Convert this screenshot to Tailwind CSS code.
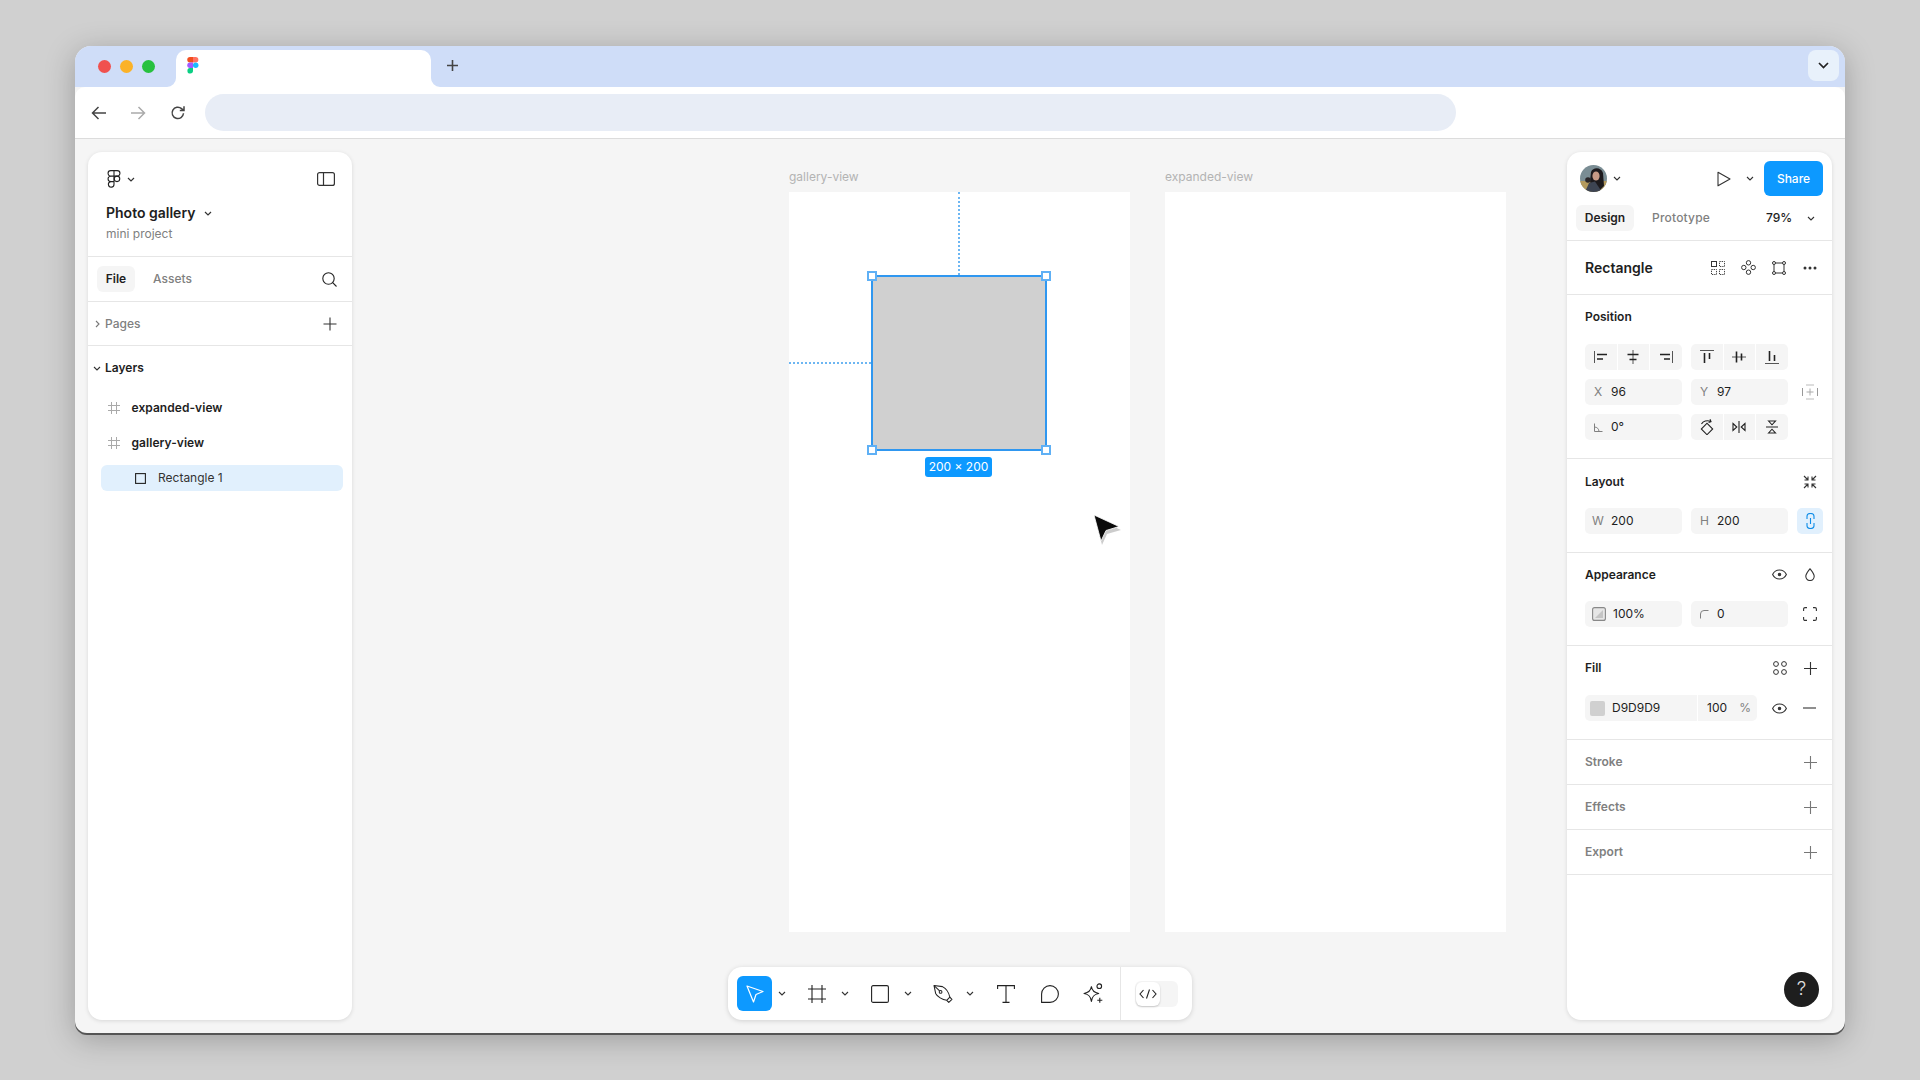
<!doctype html>
<html><head><meta charset="utf-8"><title>Photo gallery</title>
<script src="https://cdn.jsdelivr.net/npm/@tailwindcss/browser@4"></script>
</head>
<body class="m-0 w-[1920px] h-[1080px] overflow-hidden bg-[#d0d0d0] font-['Inter',sans-serif] text-[12px] text-[#1e1e1e]">
<div class="pt-[46px] pl-[75px]">
<div class="w-[1770px] h-[987px] rounded-t-[16px] rounded-b-[12px] overflow-hidden bg-[#f5f5f5] flex flex-col shadow-[0_2px_0_#555,0_6px_30px_rgba(0,0,0,0.25)]">
  <!-- tab strip -->
  <div class="h-[41px] bg-[#cfddf8] flex items-end relative shrink-0">
    <div class="flex gap-[9px] h-[41px] items-center pl-[23px] pb-[1px] w-[101px] shrink-0">
      <span class="w-[13px] h-[13px] rounded-full bg-[#f0514f]"></span>
      <span class="w-[13px] h-[13px] rounded-full bg-[#fbb228]"></span>
      <span class="w-[13px] h-[13px] rounded-full bg-[#27c13f]"></span>
    </div>
    <div class="relative w-[255px] h-[37px] bg-white rounded-t-[10px] flex items-center pl-[11px] pb-[7px]">
      <svg class="absolute -left-[9px] bottom-0" width="9" height="9" viewBox="0 0 9 9"><path d="M9 0V9H0A9 9 0 0 0 9 0Z" fill="#fff"/></svg>
      <svg class="absolute -right-[9px] bottom-0" width="9" height="9" viewBox="0 0 9 9"><path d="M0 0V9H9A9 9 0 0 1 0 0Z" fill="#fff"/></svg>
      <svg width="12" height="17" viewBox="0 0 12 17">
        <path d="M3 0H6V5.5H3A2.75 2.75 0 0 1 3 0Z" fill="#f24e1e"/>
        <path d="M6 0H8.6A2.75 2.75 0 0 1 8.6 5.5H6Z" fill="#ff7262"/>
        <path d="M3 5.5H6V11H3A2.75 2.75 0 0 1 3 5.5Z" fill="#a259ff"/>
        <circle cx="8.7" cy="8.25" r="2.75" fill="#1abcfe"/>
        <path d="M3 11H6V13.8A2.8 2.8 0 1 1 3 11Z" fill="#0acf83"/>
      </svg>
    </div>
    <div class="w-[43px] h-[41px] flex items-center justify-center pb-[3px]">
      <svg width="13" height="13" viewBox="0 0 13 13"><path d="M6.5 1V12M1 6.5H12" stroke="#444" stroke-width="1.6"/></svg>
    </div>
    <div class="ml-auto mr-[6px] mb-[6px] w-[31px] h-[31px] rounded-[8px] bg-[#e8f1fb] flex items-center justify-center">
      <svg width="11" height="7" viewBox="0 0 11 7"><path d="M1 1L5.5 5.5L10 1" fill="none" stroke="#222" stroke-width="1.7"/></svg>
    </div>
  </div>
  <!-- address bar -->
  <div class="h-[52px] bg-white rounded-t-[10px] border-b border-[#dcdcdc] flex items-center pl-[16px] shrink-0">
    <svg class="w-[16px] h-[14px] mr-[23px]" viewBox="0 0 16 14"><path d="M15 7H2M7.5 1L1.5 7L7.5 13" fill="none" stroke="#444" stroke-width="1.5"/></svg>
    <svg class="w-[16px] h-[14px] mr-[24px]" viewBox="0 0 16 14"><path d="M1 7H14M8.5 1L14.5 7L8.5 13" fill="none" stroke="#aaa" stroke-width="1.5"/></svg>
    <svg class="w-[16px] h-[16px] mr-[19px]" viewBox="0 0 16 16"><path d="M13.5 8.3A5.7 5.7 0 1 1 11.6 3.6L14 5.6M14 1.2V5.6H9.8" fill="none" stroke="#444" stroke-width="1.5"/></svg>
    <div class="w-[1251px] h-[37px] rounded-full bg-[#e8edf6]"></div>
  </div>
  <!-- main -->
  <div class="flex-1 flex px-[13px] py-[13px] min-h-0">
    <!-- left panel -->
    <aside class="w-[264px] h-[868px] bg-white rounded-[14px] shadow-[0_1px_4px_rgba(0,0,0,0.12)] shrink-0">
      <div class="h-[105px] border-b border-[#e6e6e6] pl-[18px] pr-[17px] pt-[16px]">
        <div class="flex items-center justify-between h-[22px]">
          <div class="flex items-center gap-[6px] pl-[1px]">
            <svg width="14" height="18" viewBox="0 0 14 18" fill="none" stroke="#222" stroke-width="1.1"><path d="M7 .6H3.8a2.7 2.7 0 0 0 0 5.5H7ZM7 .6h3.2a2.7 2.7 0 0 1 0 5.5H7ZM7 6.1H3.8a2.7 2.7 0 0 0 0 5.5H7ZM7 11.6H3.8A2.8 2.8 0 1 0 7 14.3Z"/><circle cx="10" cy="8.85" r="2.75"/></svg>
            <svg width="8" height="5" viewBox="0 0 8 5"><path d="M1 1L4 4L7 1" fill="none" stroke="#333" stroke-width="1.2"/></svg>
          </div>
          <svg width="18" height="14" viewBox="0 0 18 14" fill="none" stroke="#333" stroke-width="1.2"><rect x=".6" y=".6" width="16.8" height="12.8" rx="2"/><path d="M6.5 .6V13.4"/></svg>
        </div>
        <div class="flex items-center mt-[14px] h-[18px] gap-[9px]">
          <span class="text-[14px] font-semibold leading-none text-[#1e1e1e]">Photo gallery</span>
          <svg width="8" height="5" viewBox="0 0 8 5"><path d="M1 1L4 4L7 1" fill="none" stroke="#333" stroke-width="1.2"/></svg>
        </div>
        <div class="mt-[4px] text-[#808080] leading-[16px]">mini project</div>
      </div>
      <div class="h-[45px] border-b border-[#e6e6e6] flex items-center pl-[9px] pr-[15px]">
        <div class="w-[38px] h-[26px] rounded-[6px] bg-[#f5f5f5] flex items-center justify-center font-semibold">File</div>
        <div class="ml-[18px] text-[#808080] font-medium">Assets</div>
        <svg class="ml-auto" width="15" height="15" viewBox="0 0 15 15" fill="none" stroke="#222" stroke-width="1.1"><circle cx="6.5" cy="6.5" r="5.7"/><path d="M10.7 10.7L14.5 14.5"/></svg>
      </div>
      <div class="h-[44px] border-b border-[#e6e6e6] flex items-center pl-[7px] pr-[15px]">
        <svg width="5" height="8" viewBox="0 0 5 8"><path d="M1 1L4 4L1 7" fill="none" stroke="#777" stroke-width="1.1"/></svg>
        <span class="ml-[5px] font-medium text-[#808080]">Pages</span>
        <svg class="ml-auto" width="14" height="14" viewBox="0 0 14 14"><path d="M7 .5V13.5M.5 7H13.5" stroke="#333" stroke-width="1.1"/></svg>
      </div>
      <div class="h-[44px] flex items-center pl-[5px]">
        <svg width="8" height="5" viewBox="0 0 8 5"><path d="M1 1L4 4L7 1" fill="none" stroke="#333" stroke-width="1.1"/></svg>
        <span class="ml-[4px] font-semibold">Layers</span>
      </div>
      <div class="h-[35px] flex items-center pl-[20px]">
        <svg width="12" height="12" viewBox="0 0 12 12"><path d="M3.5 0V12M8.5 0V12M0 3.5H12M0 8.5H12" stroke="#aaa" stroke-width="1"/></svg>
        <span class="ml-[11.5px] font-semibold tracking-[0.05px]">expanded-view</span>
      </div>
      <div class="h-[35px] flex items-center pl-[20px]">
        <svg width="12" height="12" viewBox="0 0 12 12"><path d="M3.5 0V12M8.5 0V12M0 3.5H12M0 8.5H12" stroke="#aaa" stroke-width="1"/></svg>
        <span class="ml-[11.5px] font-semibold tracking-[0.05px]">gallery-view</span>
      </div>
      <div class="mx-[13px] mt-[5px] w-[242px] h-[26px] rounded-[6px] bg-[#e1f0fd] flex items-center pl-[34px]">
        <svg width="11" height="11" viewBox="0 0 11 11"><rect x=".6" y=".6" width="9.8" height="9.8" fill="none" stroke="#222" stroke-width="1.1"/></svg>
        <span class="ml-[12px] text-[#333]">Rectangle 1</span>
      </div>
    </aside>
    <!-- canvas -->
    <div class="flex-1 relative min-w-0">
      <div class="flex gap-[35px] pl-[437px]">
        <div class="w-[341px]">
          <div class="mt-[16px] mb-[6px] h-[18px] leading-[18px] text-[#b3b3b3]">gallery-view</div>
          <div class="relative h-[740px] bg-white">
            <div class="absolute left-[169px] top-0 h-[83px] border-l-2 border-dotted border-[#6db6f2]"></div>
            <div class="absolute left-0 top-[170px] w-[82px] border-t-2 border-dotted border-[#6db6f2]"></div>
            <div class="absolute left-[82px] top-[83px] w-[176px] h-[176px] border-2 border-[#2f97f0] bg-[#d0d0d0]">
              <span class="absolute -left-[6px] -top-[6px] w-[10px] h-[10px] bg-white border-2 border-[#5fb0f5]"></span>
              <span class="absolute -right-[6px] -top-[6px] w-[10px] h-[10px] bg-white border-2 border-[#5fb0f5]"></span>
              <span class="absolute -left-[6px] -bottom-[6px] w-[10px] h-[10px] bg-white border-2 border-[#5fb0f5]"></span>
              <span class="absolute -right-[6px] -bottom-[6px] w-[10px] h-[10px] bg-white border-2 border-[#5fb0f5]"></span>
            </div>
            <div class="absolute left-[136px] top-[265px] w-[67px] h-[20px] rounded-[3px] bg-[#0d99ff] text-white flex items-center justify-center leading-none">200 × 200</div>
            <svg class="absolute left-[302px] top-[321px]" width="32" height="34" viewBox="0 0 32 34">
              <path d="M3 3L10 30L15 19L29 15Z" fill="#000" opacity=".2" transform="translate(1 2)"/>
              <path d="M3 2L10 28L15 17.5L28 13.5Z" fill="#0a0a0a" stroke="#fff" stroke-width=".8"/>
            </svg>
          </div>
        </div>
        <div class="w-[341px]">
          <div class="mt-[16px] mb-[6px] h-[18px] leading-[18px] text-[#b3b3b3]">expanded-view</div>
          <div class="h-[740px] bg-white"></div>
        </div>
      </div>
      <!-- bottom tool bar -->
      <div class="absolute left-[376px] bottom-0 w-[464px] h-[53px] rounded-[14px] bg-white shadow-[0_1px_5px_rgba(0,0,0,0.15)] flex items-center pl-[9px]">
        <div class="w-[35px] h-[35px] rounded-[6px] bg-[#0d99ff] flex items-center justify-center">
          <svg width="20" height="20" viewBox="0 0 20 20"><path d="M2 2L18 7.5L11 10.5L8.5 18Z" fill="none" stroke="#fff" stroke-width="1.2" stroke-linejoin="round"/></svg>
        </div>
        <svg class="ml-[6px] mr-[4px]" width="8" height="5" viewBox="0 0 8 5"><path d="M1 1L4 4L7 1" fill="none" stroke="#333" stroke-width="1.1"/></svg>
        <div class="ml-[9px] w-[36px] flex justify-center"><svg width="18" height="18" viewBox="0 0 18 18"><path d="M4 0V18M14 0V18M0 4H18M0 14H18" stroke="#222" stroke-width="1.1"/></svg></div>
        <svg class="ml-[6px] mr-[4px]" width="8" height="5" viewBox="0 0 8 5"><path d="M1 1L4 4L7 1" fill="none" stroke="#333" stroke-width="1.1"/></svg>
        <div class="ml-[9px] w-[36px] flex justify-center"><svg width="18" height="18" viewBox="0 0 18 18"><rect x=".6" y=".6" width="16.8" height="16.8" rx="1.5" fill="none" stroke="#222" stroke-width="1.1"/></svg></div>
        <svg class="ml-[6px] mr-[4px]" width="8" height="5" viewBox="0 0 8 5"><path d="M1 1L4 4L7 1" fill="none" stroke="#333" stroke-width="1.1"/></svg>
        <div class="ml-[9px] w-[36px] flex justify-center"><svg width="20" height="20" viewBox="0 0 19 19" fill="none" stroke="#222" stroke-width="1" stroke-linejoin="round"><path d="M1 1.5L9 2.5C12 4 15 8 16 12.5L13 15.5C9 15 4 12 2.5 9Z"/><path d="M16 12.5L18 14.5L15 17.5L13 15.5"/><circle cx="7.2" cy="7.5" r="1.3"/><path d="M1 1.5L6.3 6.6"/></svg></div>
        <svg class="ml-[5px] mr-[4px]" width="8" height="5" viewBox="0 0 8 5"><path d="M1 1L4 4L7 1" fill="none" stroke="#333" stroke-width="1.1"/></svg>
        <div class="ml-[10px] w-[36px] flex justify-center"><svg width="18" height="18" viewBox="0 0 18 18" fill="none" stroke="#222" stroke-width="1.1"><path d="M.6 4V.6H17.4V4M9 .6V17.4M5.5 17.4H12.5"/></svg></div>
        <div class="ml-[8px] w-[36px] flex justify-center"><svg width="18" height="18" viewBox="0 0 18 18"><path d="M9 .6A8.4 8.4 0 0 1 9 17.4H.6V9A8.4 8.4 0 0 1 9 .6Z" fill="none" stroke="#222" stroke-width="1.1" stroke-linejoin="round"/></svg></div>
        <div class="ml-[7px] w-[36px] flex justify-center"><svg width="21" height="21" viewBox="0 0 20 20" fill="none" stroke="#222" stroke-width="1.05"><path d="M8 3.5C8.6 7.5 10.5 9.2 15 10C10.5 10.8 8.6 12.5 8 17.5C7.4 12.5 5.5 10.8 1 10C5.5 9.2 7.4 7.5 8 3.5Z" stroke-linejoin="round"/><circle cx="15.5" cy="3" r="2.2"/><path d="M16 14V18.8M13.6 16.4H18.4"/></svg></div>
        <div class="ml-[9px] w-px h-[53px] bg-[#e6e6e6]"></div>
        <div class="ml-[14px] w-[43px] h-[26px] rounded-[6px] bg-[#f5f5f5] pl-[1px] flex items-center">
          <div class="w-[24px] h-[24px] rounded-[6px] bg-white shadow-[0_1px_2px_rgba(0,0,0,0.2)] flex items-center justify-center">
            <svg width="18" height="10" viewBox="0 0 18 10" fill="none" stroke="#222" stroke-width="1.1"><path d="M4.5 1L1 5L4.5 9M13.5 1L17 5L13.5 9M10.5 .5L7.5 9.5"/></svg>
          </div>
        </div>
      </div>
    </div>
    <!-- right panel -->
    <aside class="w-[265px] h-[868px] bg-white rounded-[14px] shadow-[0_1px_4px_rgba(0,0,0,0.12)] shrink-0 relative">
      <div class="h-[89px] border-b border-[#e6e6e6]">
        <div class="h-[53px] flex items-center pl-[13px] pr-[9px]">
          <svg width="27" height="27" viewBox="0 0 27 27"><defs><clipPath id="av"><circle cx="13.5" cy="13.5" r="13.5"/></clipPath></defs><g clip-path="url(#av)"><rect width="27" height="27" fill="#7a8d94"/><rect y="16" width="27" height="11" fill="#b39a5e"/><path d="M11 7C13 2 21 2 23 8L24 21L19 26H12L10 16Z" fill="#1d1a1d"/><ellipse cx="16" cy="11" rx="3.6" ry="4.6" fill="#c79a86"/><path d="M5 27L9 18L15 16.5L22 27Z" fill="#3d4452"/><circle cx="8" cy="15" r="2.8" fill="#2a2628"/></g></svg>
          <svg class="ml-[6px]" width="8" height="5" viewBox="0 0 8 5"><path d="M1 1L4 4L7 1" fill="none" stroke="#333" stroke-width="1.1"/></svg>
          <svg class="ml-auto" width="14" height="16" viewBox="0 0 14 16"><path d="M1 1.2L13 8L1 14.8Z" fill="none" stroke="#333" stroke-width="1.1" stroke-linejoin="round"/></svg>
          <svg class="ml-[15px] mr-[10px]" width="8" height="5" viewBox="0 0 8 5"><path d="M1 1L4 4L7 1" fill="none" stroke="#333" stroke-width="1.1"/></svg>
          <div class="w-[59px] h-[35px] rounded-[6px] bg-[#0d99ff] text-white font-medium flex items-center justify-center">Share</div>
        </div>
        <div class="h-[26px] flex items-center pl-[9px]">
          <div class="w-[58px] h-[26px] rounded-[6px] bg-[#f5f5f5] flex items-center justify-center font-semibold">Design</div>
          <span class="ml-[18px] w-[58px] text-[#808080] font-medium tracking-[0.2px] whitespace-nowrap">Prototype</span>
          <span class="ml-[56px] font-medium">79%</span>
          <svg class="ml-[15px]" width="8" height="5" viewBox="0 0 8 5"><path d="M1 1L4 4L7 1" fill="none" stroke="#333" stroke-width="1.1"/></svg>
        </div>
      </div>
      <div class="h-[54px] border-b border-[#e6e6e6] flex items-center pl-[18px] pr-[15px]">
        <span class="text-[14px] font-semibold">Rectangle</span>
        <svg class="ml-auto" width="14" height="14" viewBox="0 0 14 14" fill="none" stroke="#333" stroke-width="1"><rect x=".5" y=".5" width="5" height="5"/><rect x="8.5" y=".5" width="5" height="5" stroke-dasharray="1.2 1"/><rect x=".5" y="8.5" width="5" height="5" stroke-dasharray="1.2 1"/><rect x="8.5" y="8.5" width="5" height="5" stroke-dasharray="1.2 1"/></svg>
        <svg class="ml-[16px]" width="15" height="15" viewBox="0 0 15 15" fill="none" stroke="#333" stroke-width="1"><circle cx="7.5" cy="2.8" r="2.2"/><circle cx="7.5" cy="12.2" r="2.2"/><circle cx="2.8" cy="7.5" r="2.2"/><circle cx="12.2" cy="7.5" r="2.2"/></svg>
        <svg class="ml-[16px]" width="14" height="14" viewBox="0 0 14 14" fill="none" stroke="#333" stroke-width="1"><circle cx="2" cy="2" r="1.5"/><circle cx="12" cy="2" r="1.5"/><circle cx="2" cy="12" r="1.5"/><circle cx="12" cy="12" r="1.5"/><path d="M3.5 2H10.5M3.5 12H10.5M2 3.5V10.5M12 3.5V10.5"/></svg>
        <svg class="ml-[17px]" width="14" height="4" viewBox="0 0 14 4" fill="#333"><circle cx="2" cy="2" r="1.5"/><circle cx="7" cy="2" r="1.5"/><circle cx="12" cy="2" r="1.5"/></svg>
      </div>
      <!-- position -->
      <div class="h-[164px] border-b border-[#e6e6e6] pl-[18px] pt-[13px]">
        <div class="h-[18px] leading-[18px] font-semibold">Position</div>
        <div class="mt-[18px] flex gap-[9px]">
          <div class="w-[97px] h-[26px] rounded-[5px] overflow-hidden grid grid-cols-3 gap-px">
            <div class="bg-[#f5f5f5] flex items-center justify-center"><svg width="14" height="14" viewBox="0 0 14 14"><path d="M.5 1V13" stroke="#555"/><path d="M3 4.5H13M3 9H9" stroke="#222" stroke-width="1.6"/></svg></div>
            <div class="bg-[#f5f5f5] flex items-center justify-center"><svg width="14" height="14" viewBox="0 0 14 14"><path d="M7 0V14" stroke="#555"/><path d="M1.5 4.5H12.5M3.5 9.5H10.5" stroke="#222" stroke-width="1.6"/></svg></div>
            <div class="bg-[#f5f5f5] flex items-center justify-center"><svg width="14" height="14" viewBox="0 0 14 14"><path d="M13.5 1V13" stroke="#555"/><path d="M1 4.5H11M5 9H11" stroke="#222" stroke-width="1.6"/></svg></div>
          </div>
          <div class="w-[97px] h-[26px] rounded-[5px] overflow-hidden grid grid-cols-3 gap-px">
            <div class="bg-[#f5f5f5] flex items-center justify-center"><svg width="14" height="14" viewBox="0 0 14 14"><path d="M0 .5H14" stroke="#555"/><path d="M4.5 3V13M9.5 3V9" stroke="#222" stroke-width="1.6"/></svg></div>
            <div class="bg-[#f5f5f5] flex items-center justify-center"><svg width="14" height="14" viewBox="0 0 14 14"><path d="M0 7H14" stroke="#555"/><path d="M4.5 1.5V12.5M9.5 3.5V10.5" stroke="#222" stroke-width="1.6"/></svg></div>
            <div class="bg-[#f5f5f5] flex items-center justify-center"><svg width="14" height="14" viewBox="0 0 14 14"><path d="M0 13.5H14" stroke="#555"/><path d="M4.5 1V11M9.5 5V11" stroke="#222" stroke-width="1.6"/></svg></div>
          </div>
        </div>
        <div class="mt-[9px] flex gap-[9px] items-center">
          <div class="w-[97px] h-[26px] rounded-[5px] bg-[#f5f5f5] flex items-center"><span class="w-[26px] pl-[9px] text-[#808080]">X</span><span>96</span></div>
          <div class="w-[97px] h-[26px] rounded-[5px] bg-[#f5f5f5] flex items-center"><span class="w-[26px] pl-[9px] text-[#808080]">Y</span><span>97</span></div>
          <div class="w-[26px] flex justify-center"><svg width="16" height="16" viewBox="0 0 16 16"><path d="M.5 4V12M15.5 4V12" stroke="#999"/><path d="M4 1H12M4 15H12" stroke="#bbb"/><path d="M8 4.5V11.5M4.5 8H11.5" stroke="#aaa"/></svg></div>
        </div>
        <div class="mt-[9px] flex gap-[9px]">
          <div class="w-[97px] h-[26px] rounded-[5px] bg-[#f5f5f5] flex items-center"><span class="w-[26px] pl-[9px]"><svg width="9" height="9" viewBox="0 0 9 9"><path d="M.5 .5V8.5H8.5M.5 4C3 4 5 6 5 8.5" fill="none" stroke="#808080"/></svg></span><span>0°</span></div>
          <div class="w-[97px] h-[26px] rounded-[5px] overflow-hidden grid grid-cols-3 gap-px">
            <div class="bg-[#f5f5f5] flex items-center justify-center"><svg width="14" height="16" viewBox="0 0 14 16" fill="none" stroke="#222" stroke-width="1.1"><rect x="3" y="6" width="8" height="8" transform="rotate(45 7 10)"/><path d="M1.5 5C3 2 7 1 10.5 2.2M10 .3L11 2.6L8.6 3.4"/></svg></div>
            <div class="bg-[#f5f5f5] flex items-center justify-center"><svg width="14" height="12" viewBox="0 0 14 12" fill="none" stroke="#222" stroke-width="1.1"><path d="M7 0V12M1 2.5L4.8 6L1 9.5ZM13 2.5L9.2 6L13 9.5Z"/></svg></div>
            <div class="bg-[#f5f5f5] flex items-center justify-center"><svg width="12" height="14" viewBox="0 0 12 14" fill="none" stroke="#222" stroke-width="1.1"><path d="M0 7H12M2.5 1L6 4.8L9.5 1ZM2.5 13L6 9.2L9.5 13Z"/></svg></div>
          </div>
        </div>
      </div>
      <!-- layout -->
      <div class="h-[94px] border-b border-[#e6e6e6] pl-[18px]">
        <div class="h-[49px] flex items-center pr-[15px] justify-between pb-[3px]">
          <span class="font-semibold">Layout</span>
          <svg width="14" height="14" viewBox="0 0 14 14" fill="none" stroke="#333" stroke-width="1.1"><path d="M1 1L5 5M5 1.5V5H1.5M13 1L9 5M9 1.5V5H12.5M1 13L5 9M5 12.5V9H1.5M13 13L9 9M9 12.5V9H12.5"/></svg>
        </div>
        <div class="flex gap-[9px]">
          <div class="w-[97px] h-[26px] rounded-[5px] bg-[#f5f5f5] flex items-center"><span class="w-[26px] pl-[7px] text-[#808080]">W</span><span>200</span></div>
          <div class="w-[97px] h-[26px] rounded-[5px] bg-[#f5f5f5] flex items-center"><span class="w-[26px] pl-[9px] text-[#808080]">H</span><span>200</span></div>
          <div class="w-[26px] h-[26px] rounded-[5px] bg-[#e1f0fd] flex items-center justify-center"><svg width="9" height="16" viewBox="0 0 9 16" fill="none" stroke="#0d8ce8" stroke-width="1.1"><path d="M1 6V3.5A3.5 3 0 0 1 8 3.5V6M1 10V12.5A3.5 3 0 0 0 8 12.5V10M4.5 5V11"/></svg></div>
        </div>
      </div>
      <!-- appearance -->
      <div class="h-[93px] border-b border-[#e6e6e6] pl-[18px]">
        <div class="h-[48px] flex items-center pr-[16px] pb-[5px]">
          <span class="font-semibold">Appearance</span>
          <svg class="ml-auto" width="15" height="11" viewBox="0 0 15 11" fill="none" stroke="#333" stroke-width="1.1"><path d="M.6 5.5C3.5 -.5 11.5 -.5 14.4 5.5C11.5 11.5 3.5 11.5 .6 5.5Z"/><circle cx="7.5" cy="5.5" r="1.2" fill="#333"/></svg>
          <svg class="ml-[18px] mr-[1px]" width="10" height="13" viewBox="0 0 10 13" fill="none" stroke="#333" stroke-width="1.1"><path d="M5 .8C3 3.5 .8 5.8 .8 8.3A4.2 4.2 0 0 0 9.2 8.3C9.2 5.8 7 3.5 5 .8Z"/></svg>
        </div>
        <div class="flex gap-[9px] items-center">
          <div class="w-[97px] h-[26px] rounded-[5px] bg-[#f5f5f5] flex items-center pl-[7px]"><svg class="mr-[7px]" width="14" height="14" viewBox="0 0 14 14"><rect x=".6" y=".6" width="12.8" height="12.8" rx="2" fill="#e6e6e6" stroke="#888" stroke-width="1.1"/><path d="M3 11L11 3V11Z" fill="#c4c4c4"/></svg><span>100%</span></div>
          <div class="w-[97px] h-[26px] rounded-[5px] bg-[#f5f5f5] flex items-center"><span class="w-[26px] pl-[9px]"><svg width="9" height="9" viewBox="0 0 9 9"><path d="M.5 8.5V4A3.5 3.5 0 0 1 4 .5H8.5" fill="none" stroke="#808080"/></svg></span><span>0</span></div>
          <div class="w-[26px] flex justify-center"><svg width="14" height="14" viewBox="0 0 14 14" fill="none" stroke="#333" stroke-width="1.1"><path d="M.6 4V2A1.4 1.4 0 0 1 2 .6H4M10 .6H12A1.4 1.4 0 0 1 13.4 2V4M13.4 10V12A1.4 1.4 0 0 1 12 13.4H10M4 13.4H2A1.4 1.4 0 0 1 .6 12V10"/></svg></div>
        </div>
      </div>
      <!-- fill -->
      <div class="h-[94px] border-b border-[#e6e6e6] pl-[18px]">
        <div class="h-[49px] flex items-center pr-[15px] pb-[5px]">
          <span class="font-semibold">Fill</span>
          <svg class="ml-auto" width="14" height="14" viewBox="0 0 14 14" fill="none" stroke="#333" stroke-width="1"><circle cx="3" cy="3" r="2.4"/><circle cx="11" cy="3" r="2.4"/><circle cx="3" cy="11" r="2.4"/><circle cx="11" cy="11" r="2.4"/></svg>
          <svg class="ml-[17px]" width="13" height="13" viewBox="0 0 13 13"><path d="M6.5 0V13M0 6.5H13" stroke="#333" stroke-width="1.1"/></svg>
        </div>
        <div class="flex items-center">
          <div class="w-[112px] h-[26px] rounded-l-[5px] bg-[#f5f5f5] flex items-center pl-[5px]"><span class="w-[15px] h-[15px] rounded-[2px] bg-[#d0d0d0] mr-[7px]"></span><span>D9D9D9</span></div>
          <div class="ml-px w-[59px] h-[26px] rounded-r-[5px] bg-[#f5f5f5] flex items-center pl-[9px]"><span>100</span><span class="ml-auto pr-[6px] text-[#808080]">%</span></div>
          <svg class="ml-[15px]" width="15" height="11" viewBox="0 0 15 11" fill="none" stroke="#333" stroke-width="1.1"><path d="M.6 5.5C3.5 -.5 11.5 -.5 14.4 5.5C11.5 11.5 3.5 11.5 .6 5.5Z"/><circle cx="7.5" cy="5.5" r="1.2" fill="#333"/></svg>
          <svg class="ml-[16px]" width="13" height="2" viewBox="0 0 13 2"><path d="M0 1H13" stroke="#333" stroke-width="1.1"/></svg>
        </div>
      </div>
      <div class="h-[45px] border-b border-[#e6e6e6] flex items-center justify-between pl-[18px] pr-[15px]"><span class="font-semibold text-[#808080]">Stroke</span><svg width="13" height="13" viewBox="0 0 13 13"><path d="M6.5 0V13M0 6.5H13" stroke="#777" stroke-width="1.1"/></svg></div>
      <div class="h-[45px] border-b border-[#e6e6e6] flex items-center justify-between pl-[18px] pr-[15px]"><span class="font-semibold text-[#808080]">Effects</span><svg width="13" height="13" viewBox="0 0 13 13"><path d="M6.5 0V13M0 6.5H13" stroke="#777" stroke-width="1.1"/></svg></div>
      <div class="h-[45px] border-b border-[#e6e6e6] flex items-center justify-between pl-[18px] pr-[15px]"><span class="font-semibold text-[#808080]">Export</span><svg width="13" height="13" viewBox="0 0 13 13"><path d="M6.5 0V13M0 6.5H13" stroke="#777" stroke-width="1.1"/></svg></div>
      <div class="absolute right-[13px] bottom-[13px] w-[35px] h-[35px] rounded-full bg-[#1e1e1e] text-[#ddd] text-[19px] font-light flex items-center justify-center">?</div>
    </aside>
  </div>
</div>
</div>
</body></html>
